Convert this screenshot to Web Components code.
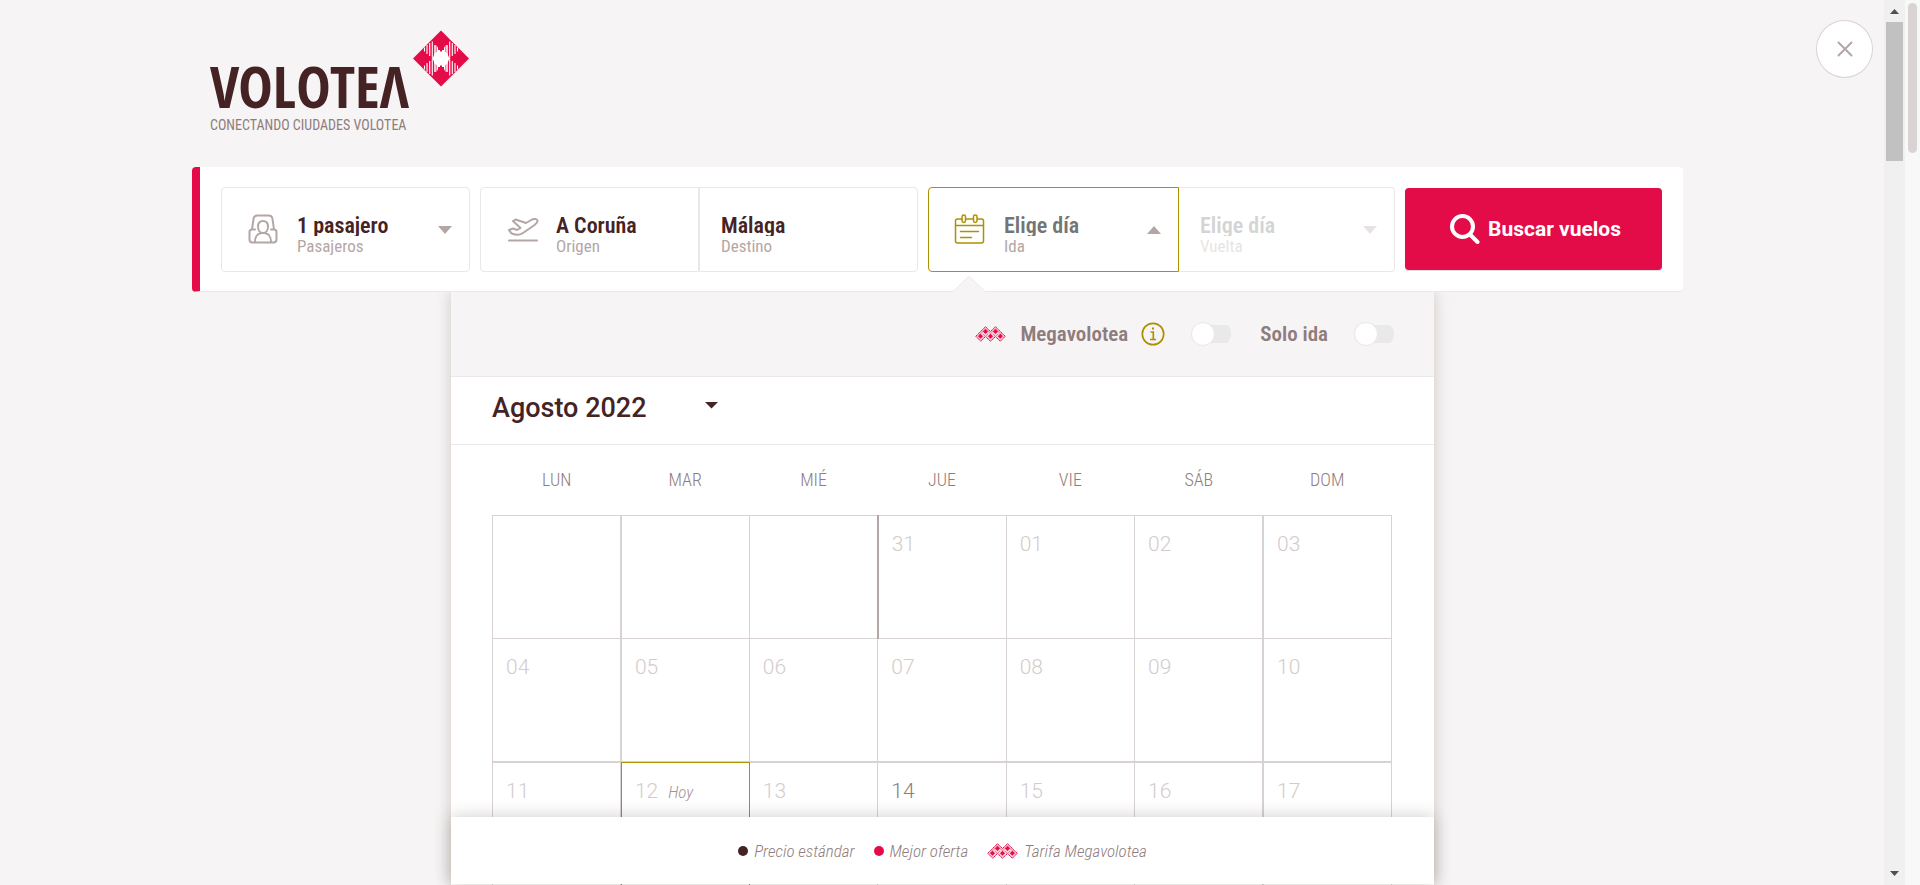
<!DOCTYPE html>
<html lang="es">
<head>
<meta charset="utf-8">
<title>Volotea – Buscar vuelos</title>
<style>
  html, body { margin: 0; height: 100%; }
  body {
    --red: #e30c48; --dark: #452325; --mauve: #b5a6a6; --gold: #ac9100;
    --text: #8f7c7c; --line: #ebe9e9; --grid: #d8d2d3; --bg: #f6f4f5;
    --condensed: "Roboto Condensed", Roboto, "Liberation Sans", sans-serif;
    --regular: Roboto, "Liberation Sans", sans-serif;
    font-family: var(--condensed); background: var(--bg); color: var(--dark);
  }
</style>
</head>
<body>
<booking-page></booking-page>

<script>
const define = (name, html, setup) => {
  const tpl = document.createElement('template');
  tpl.innerHTML = html;
  customElements.define(name, class extends HTMLElement {
    connectedCallback() {
      if (this.shadowRoot) return;
      const root = this.attachShadow({ mode: 'open' });
      root.append(tpl.content.cloneNode(true));
      if (setup) setup(this, root);
    }
  });
};

define('volotea-logo', `
<style>
  :host { display: flex; align-items: flex-start; gap: 4px; }
  .words { padding-top: 27px; }
  .name { font: 700 58px/58px "Open Sans Condensed", var(--condensed); }
  .tag { font-size: 14px; line-height: 20px; color: var(--text); }
</style>
<div class="words">
  <div class="name">VOLOTEΛ</div>
  <div class="tag">CONECTANDO CIUDADES VOLOTEA</div>
</div>
<svg width="56" height="57" viewBox="0 0 56 56" aria-hidden="true">
  <path fill="#e30c48" d="M28 0 56 28 28 56 0 28z"/>
  <g stroke="#fff" stroke-width="1.1">
    <path d="M11.500 17v4M14 14.500v9M16.700 12.500v13M19.300 11v16M44.500 17v4M42 14.500v9M39.300 12.500v13M36.700 11v16"/>
    <path d="M11.500 35v4M14 32.500v9M16.700 30.500v13M19.300 29v16M44.500 35v4M42 32.500v9M39.300 30.500v13M36.700 29v16"/>
    <path stroke-width="1.500" d="M22 14.500v27M34 14.500v27"/>
  </g>
  <path fill="#fff" d="M23.500 14.500l1.500 3v2h2v1.500h2v-1.500h2v-2l1.500-3v7l2 1.500 1 3 2 2-2 2-1 3-2 1.500v7l-1.500-3v-2h-2v-1.500h-2v1.500h-2v2l-1.500 3v-7l-2-1.500-1-3-2-2 2-2 1-3 2-1.500z"/>
</svg>`);

define('mega-icon', `
<style>:host { display: block; line-height: 0; }</style>
<svg width="31" height="16" viewBox="0 0 31 16" aria-hidden="true">
  <path fill="#fbd0db" stroke="#e30c48" stroke-dasharray="2 .300" d="M.800 10.300 10.500.800l5 4.700 5-4.700 9.700 9.500-4.900 4.900-4.800-4.700-5 4.700-5-4.700-4.800 4.700z"/>
  <path fill="none" stroke="#f0668c" stroke-width=".8" d="M3 10.300l7.500-7.500 5 5 5-5 7.500 7.500M8 8l2.500 2.500L13 8M18 8l2.500 2.500L23 8"/>
  <g fill="#e30c48"><path d="M5.500 7.800 8 10.300l-2.500 2.500L3 10.300zM10.500 3l2.500 2.500L10.500 8 8 5.500zM15.500 7.800l2.500 2.500-2.500 2.500-2.500-2.500zM20.500 3 23 5.500 20.500 8 18 5.500zM25.300 7.800l2.500 2.500-2.500 2.500-2.500-2.500z"/></g>
</svg>`);

define('search-field', `
<style>
  :host {
    box-sizing: border-box; display: flex; align-items: flex-start; flex: 1; min-width: 0; height: 85px;
    padding: 26px 17px 0 21px; border: 1px solid #e9e8e8; border-radius: 4px; background: #fff;
  }
  :host([joined=left]) { border-radius: 4px 0 0 4px; }
  :host([joined=right]) { border-radius: 0 4px 4px 0; }
  :host([active]) { border-color: var(--gold); }
  :host([disabled]) { border-left: 0; }
  :host([disabled]) .text, :host([disabled]) svg { opacity: .3; }
  slot { display: block; flex: none; }
  :host([icon]) slot { width: 54px; line-height: 0; }
  .text { flex: 1; min-width: 0; }
  input {
    display: block; box-sizing: border-box; width: 100%; height: 22px; padding: 0; border: 0; outline: 0;
    background: none; font: 600 22px/22px var(--condensed); color: var(--dark);
  }
  input::placeholder { color: #757575; opacity: 1; }
  label { display: block; font-size: 17px; font-weight: 400; line-height: 20px; color: var(--mauve); }
  svg { flex: none; margin-top: 12px; fill: var(--mauve); }
</style>
<slot></slot>
<div class="text"><input id="f" readonly><label for="f"></label></div>
<svg width="14" height="8" viewBox="0 0 14 8" aria-hidden="true"><path d="M0 0h14L7 8z"/></svg>`,
(el, root) => {
  const input = root.querySelector('input'), arrow = root.querySelector('svg');
  input.value = el.getAttribute('value') || '';
  input.placeholder = el.getAttribute('placeholder') || '';
  input.disabled = el.hasAttribute('disabled');
  root.querySelector('label').textContent = el.getAttribute('label');
  const dir = el.getAttribute('arrow');
  if (!dir) arrow.remove();
  if (dir === 'up') arrow.firstChild.setAttribute('d', 'M0 8h14L7 0z');
});

define('search-bar', `
<style>
  :host {
    box-sizing: border-box; display: grid; grid-template-columns: 249fr 438fr 467fr 257fr; gap: 10px;
    position: relative; z-index: 1; padding: 20px 21px 19px; background: #fff;
    border-left: 8px solid var(--red); border-bottom: 1px solid var(--line); border-radius: 4px;
  }
  .pair { display: flex; min-width: 0; }
  .depart { flex: 251 1 251px; }
  .return { flex: 216 1 216px; }
  svg { fill: none; stroke: var(--mauve); stroke-width: 2; stroke-linecap: round; stroke-linejoin: round; }
  .pax, .plane { margin-left: 5px; }
  .cal { stroke: var(--gold); stroke-width: 1.5; margin-left: 4px; }
  button {
    display: flex; align-items: center; justify-content: center; gap: 8px; height: 82px; margin: 1px 0 0; padding: 0 0 0 4px;
    border: 0; border-radius: 4px; background: var(--red); color: #fff; font: 700 21px/24px var(--regular);
    box-shadow: 0 1px 1px #dcdada;
  }
  button svg { stroke: #fff; stroke-width: 4; }
</style>
<search-field icon value="1 pasajero" label="Pasajeros" arrow="down">
  <svg class="pax" width="30" height="30" viewBox="0 0 30 30">
    <path d="M9 28.500H4.500a3 3 0 0 1-3-3V18c0-2 .500-2.500 2.500-2.500L5.500 5a4 4 0 0 1 4-3.500h11a4 4 0 0 1 4 3.500L26 15.500c2 0 2.500.500 2.500 2.500v7.500a3 3 0 0 1-3 3H8M4 15.500h3M26 15.500h-3M7 28c0-6 2-8 6-9h4c4 1 6 3 6 9"/>
    <path d="M10 12.500c0-3.500 2-5.500 5-5.500s5 2 5 5.500-2 6.500-5 6.500-5-3-5-6.500z"/>
  </svg>
</search-field>
<div class="pair">
  <search-field icon joined="left" value="A Coruña" label="Origen">
    <svg class="plane" width="32" height="30" viewBox="0 0 32 30">
      <path d="M2 26.500h28"/>
      <path d="M2 17l4-1.500 4 1.500 3.500-2-7.500-7 2.500-1.500L19 10l6-3.500c2-1 5-.500 5.500 1 .500 2-1 3-3 4.500L16 20c-3 2-7 2-10 1-2-.500-3-2-4-4z" transform="translate(0 -1)"/>
    </svg>
  </search-field>
  <search-field joined="right" value="Málaga" label="Destino"></search-field>
</div>
<div class="pair">
  <search-field class="depart" icon active joined="left" placeholder="Elige día" label="Ida" arrow="up">
    <svg class="cal" width="31" height="30" viewBox="0 0 31 30">
      <rect x="1.500" y="5" width="28" height="24" rx="2"/>
      <path d="M2 11.500h27M6.500 17.500h18M6.500 23.500h11"/>
      <g fill="#fff"><rect x="8" y="1" width="3.500" height="7.500" rx="1.700"/><rect x="19.500" y="1" width="3.500" height="7.500" rx="1.700"/></g>
    </svg>
  </search-field>
  <search-field class="return" disabled joined="right" placeholder="Elige día" label="Vuelta" arrow="down"></search-field>
</div>
<button type="button">
  <svg width="30" height="30" viewBox="0 0 30 30" aria-hidden="true"><circle cx="12.500" cy="12.500" r="10.500"/><path d="M20 20.500l7.500 7.500"/></svg>
  <span>Buscar vuelos</span>
</button>`);

define('toggle-switch', `
<style>
  :host { display: block; }
  input {
    appearance: none; display: flex; align-items: center; width: 40px; height: 24px; margin: 0;
    background: linear-gradient(#eae9e9, #eae9e9) center / 100% 18px no-repeat; border-radius: 12px;
  }
  input::before { content: ""; box-sizing: border-box; width: 24px; height: 24px; border: 1px solid #e9e7e8; border-radius: 50%; background: #fff; }
</style>
<input type="checkbox" role="switch">`,
(el, root) => root.querySelector('input').setAttribute('aria-label', el.getAttribute('label')));

define('fare-options', `
<style>
  :host {
    box-sizing: border-box; display: flex; align-items: center; justify-content: flex-end; height: 85px;
    padding: 0 40px 0 0; background: var(--bg); border-bottom: 1px solid var(--line);
    font-size: 21px; font-weight: 600; color: var(--text);
  }
  mega-icon { margin-right: 14px; }
  .info { margin: 0 26px 0 13px; padding: 0; border: 0; background: none; line-height: 0; }
  .solo { margin: 0 26px 0 29px; }
</style>
<mega-icon></mega-icon>
<span>Megavolotea</span>
<button class="info" type="button" aria-label="Información">
  <svg width="24" height="24" viewBox="0 0 24 24" fill="none" stroke="#ac9100" stroke-width="1.700"><circle cx="12" cy="12" r="10.700"/><path d="M9.500 10h2.800v7.500M9 17.500h6"/><path stroke-width="2" d="M11 6.500h2"/></svg>
</button>
<toggle-switch label="Megavolotea"></toggle-switch>
<span class="solo">Solo ida</span>
<toggle-switch label="Solo ida"></toggle-switch>`);

define('month-picker', `
<style>
  :host { box-sizing: border-box; display: flex; height: 68px; padding: 15px 41px 0; background: #fff; border-bottom: 1px solid var(--line); }
  label { display: grid; grid-template-columns: 213px 13px; }
  select {
    grid-area: 1 / 1 / 2 / 3; appearance: none; height: 32px; padding: 0; border: 0; background: none;
    font: 500 27px/32px var(--regular); color: var(--dark);
  }
  svg { grid-area: 1 / 2; margin-top: 10px; pointer-events: none; }
</style>
<label>
  <select aria-label="Mes"><option>Agosto 2022</option></select>
  <svg width="13" height="7" viewBox="0 0 13 7" fill="#452325"><path d="M0 0h13L6.500 6.500z"/></svg>
</label>`);

define('month-grid', `
<style>
  :host { display: block; padding: 0 42px 0 41px; background: #fff; }
  table { width: 100%; table-layout: fixed; border-collapse: collapse; }
  th { height: 70px; padding: 0; font-size: 18px; font-weight: 300; line-height: 20px; color: var(--text); }
  td {
    box-sizing: border-box; position: relative; height: 123px; padding: 16px 13px 0; vertical-align: top;
    border: 1px solid var(--grid); font: 300 21px/24px var(--regular); color: #d3cccc;
  }
  td:nth-child(2), td:nth-child(7) { border-left-width: 2px; }
  tr:nth-child(3) td { height: 128px; border-top-width: 2px; }
  td.start { border-left: 2px solid var(--mauve); }
  td.open { color: var(--text); }
  td.today::after { content: ""; position: absolute; inset: -1px -1px 0; border: 1px solid var(--gold); }
  i { margin-left: 10px; font: italic 300 17px/24px var(--condensed); color: #a39494; }
</style>
<table>
  <thead><tr></tr></thead>
  <tbody></tbody>
</table>`,
(el, root) => {
  root.querySelector('thead tr').innerHTML =
    ['LUN', 'MAR', 'MIÉ', 'JUE', 'VIE', 'SÁB', 'DOM'].map(d => `<th scope="col">${d}</th>`).join('');
  const weeks = [['', '', '', '31', '01', '02', '03'],
    ['04', '05', '06', '07', '08', '09', '10'],
    ['11', '12', '13', '14', '15', '16', '17']];
  const kind = { 31: 'start', 12: 'today', 14: 'open' };
  root.querySelector('tbody').innerHTML = weeks.map(w => '<tr>' + w.map(d =>
    `<td class="${kind[d] || ''}">${d}${d === '12' ? '<i>Hoy</i>' : ''}</td>`).join('') + '</tr>').join('');
});

define('fare-legend', `
<style>
  :host {
    display: flex; align-items: center; justify-content: center; gap: 19px; height: 67px; background: #fff;
    box-shadow: 0 0 16px rgba(69, 50, 40, .25); font: italic 300 17px/20px var(--condensed); color: var(--text);
  }
  span { display: flex; align-items: center; gap: 6px; }
  b { width: 10px; height: 10px; border-radius: 50%; background: var(--dark); }
  .best { background: var(--red); }
</style>
<span><b></b>Precio estándar</span>
<span><b class="best"></b>Mejor oferta</span>
<span><mega-icon></mega-icon>Tarifa Megavolotea</span>`);

define('calendar-panel', `
<style>
  :host { display: block; position: relative; height: 100%; box-shadow: 0 0 14px rgba(90, 70, 50, .25); }
  .scroll { height: 100%; overflow: hidden; background: #fff; }
  .notch { position: absolute; z-index: 2; left: 502px; top: -16px; }
  fare-legend { position: absolute; left: 0; right: 0; bottom: 1px; }
</style>
<div class="scroll">
  <fare-options></fare-options>
  <month-picker></month-picker>
  <month-grid></month-grid>
</div>
<svg class="notch" width="32" height="17" viewBox="0 0 32 17" aria-hidden="true"><path fill="#f6f4f5" d="M0 17v-1L14.500 1.500q1.500-1.500 3 0L32 16v1z"/><path fill="none" stroke="#ebe9e9" d="M0 15.500 14.500 1.500q1.500-1.500 3 0L32 15.500"/></svg>
<fare-legend></fare-legend>`);

define('scroll-rail', `
<style>
  :host { box-sizing: border-box; display: flex; flex-direction: column; align-items: stretch; height: 100%; background: #f8f8f8; padding: 3px 3px 0; }
  i { height: 150px; border-radius: 5px; background: #d9d3d3; }
  svg { display: none; }
  :host([arrows]) { background: #f0f0f0; padding: 9px 2px; }
  :host([arrows]) svg { display: block; align-self: center; fill: #505050; }
  :host([arrows]) i { height: 139px; border-radius: 0; background: #c1c1c1; margin: 8px 0 auto; }
</style>
<svg width="9" height="5" viewBox="0 0 9 5"><path d="M0 5h9L4.500 0z"/></svg>
<i></i>
<svg width="9" height="5" viewBox="0 0 9 5"><path d="M0 0h9L4.500 5z"/></svg>`);

define('booking-page', `
<style>
  :host { display: grid; grid-template-columns: minmax(0, 1fr) 21px 15px; height: 100vh; overflow: hidden; background: var(--bg); }
  main { position: relative; display: flex; flex-direction: column; min-height: 0; }
  .column { width: 100%; max-width: 1491px; box-sizing: border-box; margin: 0 auto; }
  .wrap { padding-right: 9px; position: relative; z-index: 1; }
  header { box-sizing: border-box; height: 167px; padding: 30px 0 0 18px; }
  .panel { flex: 1; min-height: 0; width: 100%; max-width: 983px; margin: 0 auto; }
  .panel-wrap { flex: 1; min-height: 0; display: flex; padding-left: 1px; }
  calendar-panel { height: 100%; }
  .close {
    position: absolute; z-index: 2; top: 20px; right: 11px; width: 57px; height: 58px; padding: 0;
    border: 1px solid #d9d3d3; border-radius: 50%; background: #fff; line-height: 0;
  }
</style>
<main>
  <div class="wrap">
    <header class="column"><volotea-logo></volotea-logo></header>
    <search-bar class="column"></search-bar>
  </div>
  <div class="panel-wrap"><div class="panel"><calendar-panel></calendar-panel></div></div>
  <button class="close" type="button" aria-label="Cerrar">
    <svg width="16" height="16" viewBox="0 0 16 16" stroke="#b5a6a6" stroke-width="2" stroke-linecap="round"><path d="M1.500 1.500l13 13M14.500 1.500l-13 13"/></svg>
  </button>
</main>
<scroll-rail arrows></scroll-rail>
<scroll-rail></scroll-rail>`);
</script>
</body>
</html>
